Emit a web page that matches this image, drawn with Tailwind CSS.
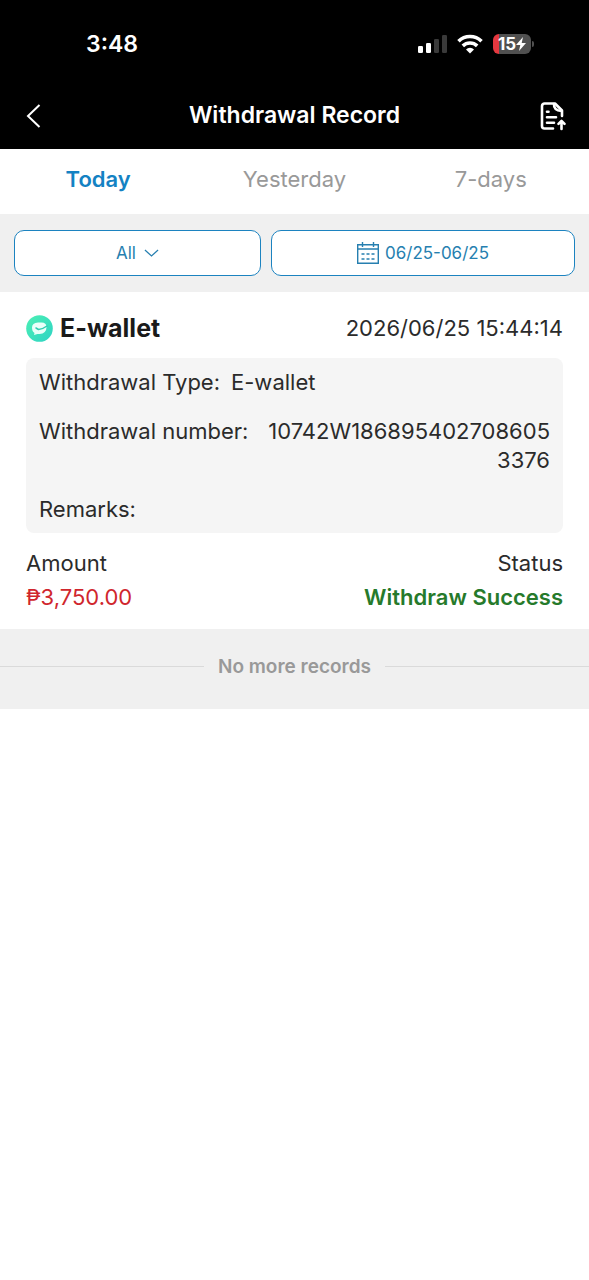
<!DOCTYPE html>
<html lang="en">
<head>
<meta charset="utf-8">
<meta name="viewport" content="width=device-width, initial-scale=1">
<title>Withdrawal Record</title>
<script src="https://cdn.jsdelivr.net/npm/@tailwindcss/browser@4"></script>
</head>
<body class="min-h-screen bg-white font-['Inter','Liberation_Sans',sans-serif] text-[22px] leading-[29px] text-[#2b2b2b]">
<header class="bg-black text-white">
  <div class="flex h-[82px] items-center justify-between pt-[6px] pr-[55px] pl-[86px]">
    <span class="text-[23px] font-semibold">3:48</span>
    <div class="flex items-center gap-[10px]">
      <svg class="h-5 w-[30px]" viewBox="0 0 30 20" aria-label="Signal">
        <rect x="1" y="12" width="5" height="7" rx="1.3" fill="#fff"/>
        <rect x="9" y="9" width="5" height="10" rx="1.3" fill="#fff"/>
        <rect x="17" y="5" width="5" height="14" rx="1.3" fill="#3a3a3a"/>
        <rect x="25" y="1" width="5" height="18" rx="1.3" fill="#3a3a3a"/>
      </svg>
      <svg class="h-5 w-[26px]" viewBox="0 0 26 20" fill="none" stroke="#fff" stroke-width="3.6" aria-label="Wi-Fi">
        <path d="M1.5 7.2a16.500 16.500 0 0 1 23 0"/>
        <path d="M5.800 11.900a10.400 10.400 0 0 1 14.400 0"/>
        <path d="M13 19.500l-4-4a5.600 5.600 0 0 1 8 0z" fill="#fff" stroke="none"/>
      </svg>
      <div class="flex items-center gap-px" aria-label="Battery 15%, charging">
        <span class="flex h-5 w-[38px] items-center justify-center rounded-md bg-linear-to-r from-[#e5383f] from-15% to-[#505050] to-15% text-[17px] leading-5 font-bold">15<svg class="h-[14px] w-[10px]" viewBox="0 0 10 14" fill="#fff"><path d="M7 0L0 8h4.300L3 14l7-8H5.700z"/></svg></span>
        <span class="h-[6px] w-[2px] rounded-r-sm bg-[#505050]"></span>
      </div>
    </div>
  </div>
  <div class="grid h-[67px] grid-cols-[60px_1fr_60px] items-center">
    <button type="button" aria-label="Back" class="pl-[26px]">
      <svg class="h-6 w-4" viewBox="0 0 16 24" fill="none" stroke="#fff" stroke-width="2"><path d="M13.500 1L2 12l11.500 11"/></svg>
    </button>
    <h1 class="text-center text-[23px] font-semibold">Withdrawal Record</h1>
    <button type="button" aria-label="Export records" class="pl-[11px]">
      <svg class="h-[30px] w-[26px]" viewBox="0 0 26 30" fill="none" stroke="#fff" stroke-width="2.600" stroke-linecap="round" stroke-linejoin="round">
        <path d="M13 27.500H4.500a2.500 2.500 0 0 1-2.500-2.500V5A2.500 2.500 0 0 1 4.500 2.500h10.500L22 9.500V15"/>
        <path d="M14 3q-.5 6.500 7.500 7"/>
        <path d="M7 10.800h1.500M7 16.300h9M7 21.800h7M21.500 28v-7.500M18.500 22.800l3-3 3 3"/>
      </svg>
    </button>
  </div>
</header>
<main>
  <nav class="grid h-[65px] grid-cols-3 pb-1 text-[#999]">
    <button type="button" aria-current="true" class="font-semibold text-[#1482c3]">Today</button>
    <button type="button">Yesterday</button>
    <button type="button">7-days</button>
  </nav>
  <div class="grid grid-cols-[247fr_304fr] gap-[10px] bg-[#f0f0f0] px-[14px] py-4 text-[17px] text-[#267fb0]">
    <label class="flex h-[46px] items-center justify-center gap-2 rounded-[10px] border border-[#1c83c0] bg-white">
      <select aria-label="Withdrawal type" class="field-sizing-content appearance-none bg-transparent outline-none"><option>All</option></select>
      <svg class="h-2 w-[15px]" viewBox="0 0 16 8" fill="none" stroke="currentColor" stroke-width="1.300"><path d="M1 .8l7 6.400 7-6.400"/></svg>
    </label>
    <button type="button" class="flex h-[46px] items-center justify-center gap-[6px] rounded-[10px] border border-[#1c83c0] bg-white">
      <svg class="h-6 w-[22px]" viewBox="0 0 22 24" fill="none" stroke="currentColor" stroke-width="1.400">
        <path d="M.7 3.700h20.600v18.600H.7zM.7 8h20.600M5.500 1v5M16.500 1v5"/>
        <path d="M4.500 13h3M9.500 13h3M14.500 13h3M4.500 18h3M9.500 18h3M14.500 18h3" stroke-width="1.600"/>
      </svg>
      06/25-06/25
    </button>
  </div>
  <article class="px-[26px] pt-[22px] pb-[17px]">
    <div class="flex items-center justify-between">
      <h2 class="flex items-center gap-[7px] text-[25px] font-bold text-[#1a1a1a]">
        <svg class="size-[27px]" viewBox="0 0 27 27">
          <defs><linearGradient id="mint" x1="0" y1="0" x2="1" y2="1"><stop stop-color="#4cf0b4"/><stop offset="1" stop-color="#2ed3c4"/></linearGradient></defs>
          <circle cx="13.500" cy="13.500" r="13.300" fill="url(#mint)"/>
          <path d="M6 12.500q0-4.500 6-5h3.500q5 0 5 4.500 0 6.500-7 7h-2l-3.500 1 .5-2Q6 16.500 6 12.500z" fill="#e9fff9"/>
          <path d="M10 13l2.500 1.500q4-.2 8.500-3.500" fill="none" stroke="#2fcdb0" stroke-width="1.500" stroke-linecap="round" stroke-linejoin="round"/>
        </svg>
        E-wallet
      </h2>
      <time datetime="2026-06-25T15:44:14">2026/06/25 15:44:14</time>
    </div>
    <dl class="mt-[15px] flex flex-col gap-5 rounded-lg bg-[#f5f5f5] px-[13px] pt-[10px] pb-[9px]">
      <div class="flex gap-[11px]"><dt>Withdrawal Type:</dt><dd>E-wallet</dd></div>
      <div class="flex justify-between gap-4"><dt class="shrink-0">Withdrawal number:</dt><dd class="text-right break-all">10742W1868954027086053376</dd></div>
      <div class="flex"><dt>Remarks:</dt><dd></dd></div>
    </dl>
    <div class="mt-4 flex justify-between">
      <dl class="flex flex-col gap-[5px]"><dt>Amount</dt><dd class="text-[#d0262d]">₱3,750.00</dd></dl>
      <dl class="flex flex-col gap-[5px] text-right"><dt>Status</dt><dd class="font-semibold text-[#267a2b]">Withdraw Success</dd></dl>
    </div>
  </article>
  <footer class="flex h-20 items-center gap-[14px] bg-[#f0f0f0] pb-[6px] text-[19px] font-semibold text-[#999]">
    <span class="h-px flex-1 bg-[#dadada]"></span>
    No more records
    <span class="h-px flex-1 bg-[#dadada]"></span>
  </footer>
</main>
</body>
</html>
